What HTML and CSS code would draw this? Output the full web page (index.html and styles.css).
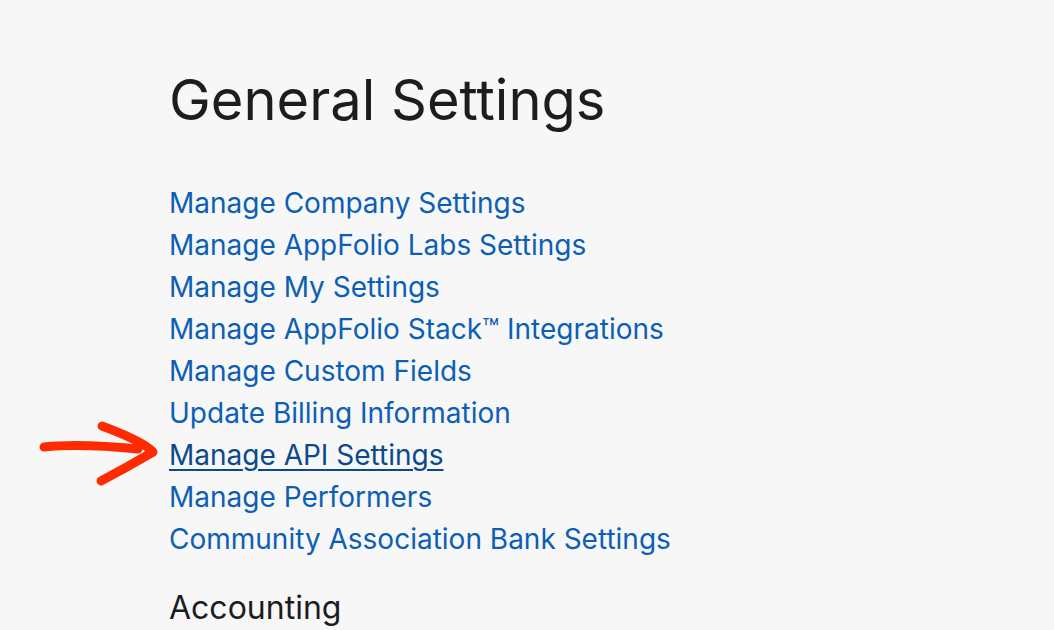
FILE: index.html
```html
<!DOCTYPE html>
<html lang="en">
<head>
  <meta charset="UTF-8" />
  <title>General Settings</title>
  <link rel="stylesheet" href="styles.css">
</head>
<body>
  <div class="page">
    <h1 class="title">General Settings</h1>
    <ul class="links">
      <li><a href="#">Manage Company Settings</a></li>
      <li><a href="#">Manage AppFolio Labs Settings</a></li>
      <li><a href="#">Manage My Settings</a></li>
      <li><a href="#">Manage AppFolio Stack™ Integrations</a></li>
      <li><a href="#">Manage Custom Fields</a></li>
      <li><a href="#">Update Billing Information</a></li>
      <li class="marked">
        <svg class="arrow" width="130" height="74" viewBox="0 0 130 74">
          <path d="M6 31 C35 28 70 30 100 33" />
          <path d="M64 10 C88 19 108 28 115 36 C98 46 80 56 63 65" />
        </svg>
        <a href="#" class="hover">Manage API Settings</a>
      </li>
      <li><a href="#">Manage Performers</a></li>
      <li><a href="#">Community Association Bank Settings</a></li>
    </ul>
    <h2 class="section">Accounting</h2>
  </div>
</body>
</html>
```

FILE: styles.css
```css
html, body {
  margin: 0;
  padding: 0;
  background: #f7f7f7;
  font-family: Inter, "Noto Sans", sans-serif;
  overflow: hidden;
}

.page {
  padding: 64px 0 0 169px;
}

.title {
  margin: 0;
  font-size: 56px;
  font-weight: 400;
  line-height: 72px;
  color: #1c1d1f;
}

.links {
  list-style: none;
  margin: 46px 0 0;
  padding: 0;
}

.links li {
  font-size: 28px;
  line-height: 42px;
}

.links a {
  color: #0c5fb5;
  text-decoration: none;
}

.links a.hover {
  color: #0b4a8a;
  text-decoration: underline;
  text-underline-offset: 4px;
  text-decoration-thickness: 2px;
}

.marked {
  position: relative;
}

.arrow {
  position: absolute;
  left: -131px;
  top: -18px;
  fill: none;
  stroke: #ff2a00;
  stroke-width: 9;
  stroke-linecap: round;
  stroke-linejoin: round;
}

.section {
  margin: 28px 0 0;
  font-size: 32px;
  font-weight: 400;
  line-height: 40px;
  color: #1c1d1f;
}
```
